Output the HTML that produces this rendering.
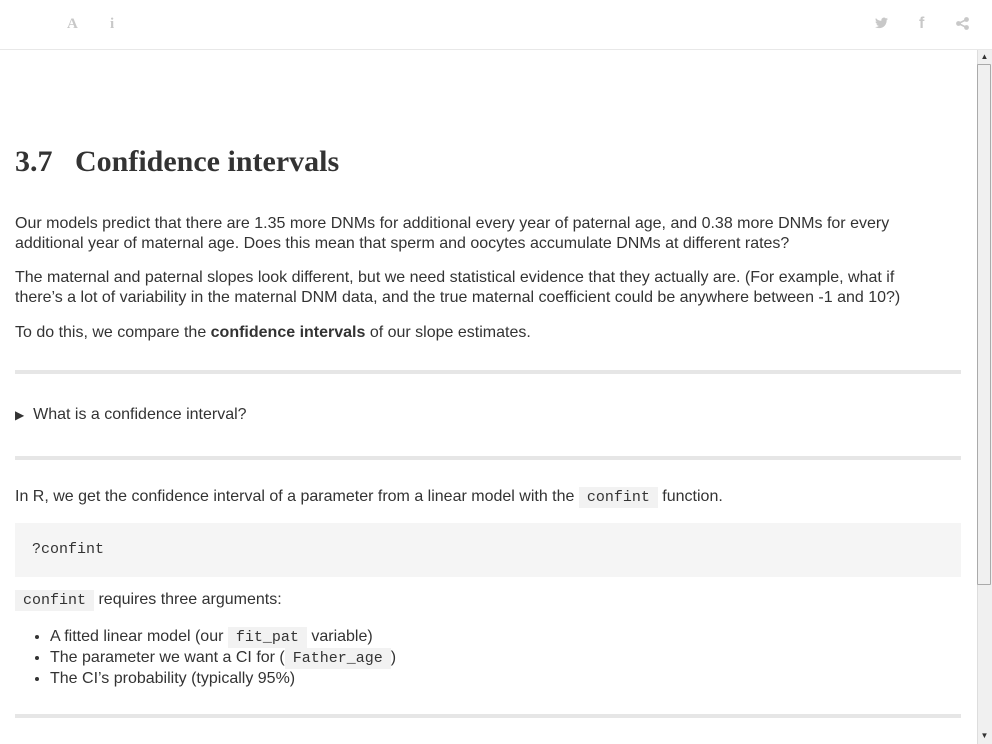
<!DOCTYPE html>
<html><head><style>
body{margin:0;width:992px;height:744px;overflow:hidden;background:#fff;font-family:"Liberation Sans",sans-serif;color:#333;position:relative}
.top{position:absolute;left:0;top:0;width:992px;height:49px;border-bottom:1px solid #e8e8e8}
.ic{position:absolute;top:16px;color:#c8c8c8;font-size:15px;font-weight:bold;line-height:16px}
.sb{position:absolute;left:977px;top:50px;width:15px;height:694px;background:#f0f0f0;border-left:1px solid #ddd}
.thumb{position:absolute;left:977px;top:64px;width:14px;height:521px;background:#f0f0f0;border:1px solid #aaa;box-sizing:border-box;border-radius:1px}
.c{position:absolute;left:15px;width:946px}
p{margin:0;font-size:16px;line-height:20px}
h1{margin:0;font-family:"Liberation Serif",serif;font-size:30px;font-weight:bold;color:#333}
.hr{position:absolute;left:15px;width:946px;height:4px;background:#e6e6e6}
code{font-family:"Liberation Mono",monospace;font-size:15px;background:#f2f2f2;padding:2px 8px;line-height:16px}
ul{margin:0;padding:0 0 0 35px;font-size:16px;line-height:21px}
li{height:21px}
</style></head><body>
<div class="top">
<span class="ic" style="left:67px;font-family:'Liberation Serif',serif">A</span>
<span class="ic" style="left:110px;font-family:'Liberation Serif',serif">i</span>
<svg style="position:absolute;left:875px;top:17px" width="13" height="12" viewBox="0 0 24 20"><path fill="#c8c8c8" d="M24 2.4a10 10 0 0 1-2.8.8A5 5 0 0 0 23.3.4a10 10 0 0 1-3.1 1.2A4.9 4.9 0 0 0 11.8 6 14 14 0 0 1 1.7.9a4.9 4.9 0 0 0 1.5 6.6A4.9 4.9 0 0 1 1 6.9a4.9 4.9 0 0 0 3.9 4.9 5 5 0 0 1-2.2.1 4.9 4.9 0 0 0 4.6 3.4A9.9 9.9 0 0 1 0 17.3 14 14 0 0 0 7.500 19.5c9.1 0 14-7.5 14-14v-.6A10 10 0 0 0 24 2.4z"/></svg>
<span class="ic" style="left:919px;top:16px;font-size:16px">f</span>
<svg style="position:absolute;left:956px;top:17px" width="13" height="13" viewBox="0 0 13 13"><circle cx="10.5" cy="2.5" r="2.4" fill="#c8c8c8"/><circle cx="2.5" cy="6.5" r="2.4" fill="#c8c8c8"/><circle cx="10.5" cy="10.5" r="2.4" fill="#c8c8c8"/><path d="M10.5 2.5L2.5 6.5L10.5 10.5" stroke="#c8c8c8" stroke-width="1.6" fill="none"/></svg>
</div>
<div class="sb"></div>
<div style="position:absolute;left:978px;top:51px;width:13px;height:12px;font-size:8px;text-align:center;line-height:12px">▲</div>
<div class="thumb"></div>
<div style="position:absolute;left:978px;top:730px;width:13px;height:12px;font-size:8px;text-align:center;line-height:12px">▼</div>

<div class="c" style="top:145px"><h1>3.7&nbsp;&nbsp;&nbsp;Confidence intervals</h1></div>
<div class="c" style="top:214px"><p>Our models predict that there are 1.35 more DNMs for additional every year of paternal age, and 0.38 more DNMs for every additional year of maternal age. Does this mean that sperm and oocytes accumulate DNMs at different rates?</p></div>
<div class="c" style="top:268px"><p>The maternal and paternal slopes look different, but we need statistical evidence that they actually are. (For example, what if<br>there’s a lot of variability in the maternal DNM data, and the true maternal coefficient could be anywhere between -1 and 10?)</p></div>
<div class="c" style="top:323px"><p>To do this, we compare the <b>confidence intervals</b> of our slope estimates.</p></div>
<div class="hr" style="top:370px"></div>
<div class="c" style="top:405px"><p><span style="font-size:12px">▶</span>&nbsp;&nbsp;What is a confidence interval?</p></div>
<div class="hr" style="top:456px"></div>
<div class="c" style="top:487px"><p>In R, we get the confidence interval of a parameter from a linear model with the <code>confint</code> function.</p></div>
<div style="position:absolute;left:15px;top:523px;width:946px;height:54px;background:#f5f5f5"></div>
<div style="position:absolute;left:32px;top:541px;font-family:'Liberation Mono',monospace;font-size:15px;color:#333">?confint</div>
<div class="c" style="top:590px"><p><code>confint</code> requires three arguments:</p></div>
<div class="c" style="top:626px"><ul>
<li>A fitted linear model (our <code>fit_pat</code> variable)</li>
<li>The parameter we want a CI for (<code>Father_age</code>)</li>
<li>The CI’s probability (typically 95%)</li></ul></div>
<div class="hr" style="top:714px"></div>
</body></html>
